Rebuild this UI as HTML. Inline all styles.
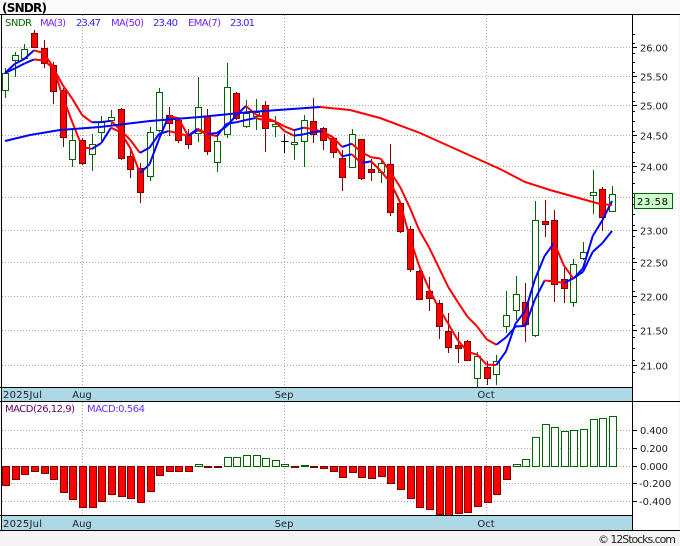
<!DOCTYPE html>
<html><head><meta charset="utf-8"><style>
html,body{margin:0;padding:0;background:#f4f4f4;}
svg{display:block;font-family:"DejaVu Sans","Liberation Sans",sans-serif;}
</style></head><body>
<svg id="s" width="680" height="546" xmlns="http://www.w3.org/2000/svg">
<rect x="0" y="0" width="680" height="546" fill="#f4f4f4"/>
<rect x="0" y="0" width="680" height="14" fill="#fafafa"/>
<rect x="1" y="14" width="678" height="516" fill="#fff"/>
<rect x="1" y="387" width="631" height="14" fill="#add8e6"/>
<rect x="1" y="516" width="631" height="14" fill="#add8e6"/>
<text x="2" y="12" font-size="12" font-weight="bold" fill="#000" textLength="45">(SNDR)</text>
<g id="g"></g>
<line x1="0" y1="14.5" x2="680" y2="14.5" stroke="#000"/>
<line x1="0" y1="387.5" x2="632" y2="387.5" stroke="#000"/>
<line x1="0" y1="401.5" x2="680" y2="401.5" stroke="#000"/>
<line x1="0" y1="515.5" x2="632" y2="515.5" stroke="#000"/>
<line x1="0" y1="530.5" x2="680" y2="530.5" stroke="#000"/>
<line x1="1.5" y1="14" x2="1.5" y2="530" stroke="#000"/>
<line x1="632.5" y1="14" x2="632.5" y2="530" stroke="#000"/>
<g font-size="10" fill="#222">
<text x="3" y="398" textLength="39">2025Jul</text>
<text x="82" y="398" text-anchor="middle">Aug</text>
<text x="284" y="398" text-anchor="middle">Sep</text>
<text x="486" y="398" text-anchor="middle">Oct</text>
<text x="3" y="527" textLength="39">2025Jul</text>
<text x="82" y="527" text-anchor="middle">Aug</text>
<text x="284" y="527" text-anchor="middle">Sep</text>
<text x="486" y="527" text-anchor="middle">Oct</text>
</g>
<g font-size="10">
<text x="5" y="26" fill="#006400" textLength="27">SNDR</text>
<text x="40" y="26" fill="#7a22ff" textLength="26">MA(3)</text>
<text x="76" y="26" fill="#3322ff" textLength="25">23.47</text>
<text x="111" y="26" fill="#7a22ff" textLength="33">MA(50)</text>
<text x="153" y="26" fill="#3322ff" textLength="25">23.40</text>
<text x="188" y="26" fill="#7a22ff" textLength="33">EMA(7)</text>
<text x="230" y="26" fill="#3322ff" textLength="25">23.01</text>
<text x="5" y="412" fill="#660066" textLength="70">MACD(26,12,9)</text>
<text x="87" y="412" fill="#6633ff" textLength="58">MACD:0.564</text>
</g>
<text x="676" y="543" font-size="11" fill="#222" text-anchor="end" textLength="78">© 12Stocks.com</text>
</svg>
<script>
var g=document.getElementById('g'),h='';
function L(x1,y1,x2,y2,c,w,d){h+='<line x1="'+x1+'" y1="'+y1+'" x2="'+x2+'" y2="'+y2+'" stroke="'+c+'" stroke-width="'+(w||1)+'"'+(d?' stroke-dasharray="'+d+'"':'')+'/>';}
function T(x,y,t,tl){h+='<text x="'+x+'" y="'+y+'" font-size="10" fill="#222"'+(tl?' textLength="'+tl+'"':'')+'>'+t+'</text>';}
function Y(p){return 47+(Math.log(26)-Math.log(p))*1488.6;}
for(var p=21;p<=26.001;p+=0.5){var y=Math.round(Y(p))+0.5;L(2,y,632,y,'#aaa',1,'1,2');L(632,y,637,y,'#000');T(640,y+4,p.toFixed(2),28);}
for(var p=20.9;p<=26.3;p+=0.1667){var y=Math.round(Y(p))+0.5;if(y>16&&y<386)L(632,y,635,y,'#000');}
[82,284,486].forEach(function(x){L(x+0.5,15,x+0.5,387,'#aaa',1,'1,2');L(x+0.5,402,x+0.5,515,'#aaa',1,'1,2');});
[[430,'0.400',640,28],[448,'0.200',640,28],[466,'0.000',640,28],[483,'-0.200',639,0],[501,'-0.400',639,0]].forEach(function(a){L(2,a[0]+0.5,632,a[0]+0.5,'#aaa',1,'1,2');L(632,a[0]+0.5,637,a[0]+0.5,'#000');T(a[2],a[0]+4,a[1],a[3]);});
var D=[[73,90,68,98,'g'],[55,60,52,77,'g'],[49,58,44,60,'g'],[33,47,30,48,'r'],[48,63,40,68,'r'],[65,91,62,104,'r'],[90,137,88,147,'r'],[140,159,130,167,'g'],[140,163,138,165,'r'],[144,154,134,171,'g'],[122,132,116,143,'g'],[117,120,110,125,'g'],[109,158,108,160,'r'],[156,169,150,178,'r'],[168,192,163,203,'r'],[132,176,127,181,'g'],[92,130,88,132,'g'],[115,123,107,136,'r'],[120,140,117,143,'r'],[135,144,129,149,'r'],[107,133,77,142,'g'],[116,151,109,155,'r'],[141,162,136,172,'g'],[87,134,63,138,'g'],[93,118,92,120,'r'],[113,126,100,128,'g'],[112,116,99,130,'g'],[105,128,101,152,'r'],[124,125,116,137,'g'],[141,141,134,153,'k'],[142,142,130,160,'g'],[120,141,115,167,'g'],[121,134,98,143,'r'],[128,140,127,150,'r'],[138,152,137,158,'r'],[158,177,150,191,'r'],[134,167,129,168,'g'],[139,178,139,180,'r'],[169,172,159,181,'r'],[163,172,159,183,'g'],[164,212,144,216,'r'],[203,231,203,233,'r'],[229,269,226,272,'r'],[271,299,270,300,'r'],[291,298,277,311,'r'],[303,326,300,339,'r'],[331,347,313,353,'r'],[345,348,332,363,'r'],[341,360,340,361,'r'],[356,378,352,387,'g'],[367,378,361,385,'r'],[361,374,355,385,'g'],[315,326,291,333,'g'],[294,310,276,320,'g'],[302,324,283,342,'r'],[220,335,201,337,'g'],[221,224,200,237,'r'],[220,284,210,302,'r'],[279,288,268,303,'r'],[264,302,259,307,'g'],[252,258,242,260,'g'],[192,195,170,214,'g'],[189,217,187,231,'r'],[194,211,186,212,'g']];
function X(i){return 5+i*9.635;}
D.forEach(function(d,i){var x=Math.round(X(i))+0.5;var c=d[4]=='g'?'#006400':(d[4]=='k'?'#000':'#800000');
L(x,d[2],x,d[3],c,1);
if(d[4]=='k'){L(x-3,d[0]+0.5,x+4,d[0]+0.5,'#000');return;}
var hgt=Math.max(d[1]-d[0],2);
h+='<rect x="'+(x-3)+'" y="'+(d[0]+0.5)+'" width="6" height="'+hgt+'" fill="'+(d[4]=='g'?'#fff':'#ff0000')+'" stroke="'+c+'"/>';});
var C=D.map(function(d){return d[4]=='r'?d[1]:d[0];});
var M3=C.map(function(c,i){var s=0,n=0;for(var k=Math.max(0,i-2);k<=i;k++){s+=C[k];n++;}return s/n;});
var E=[],a=2/8;C.forEach(function(c,i){E.push(i==0?c:E[i-1]+a*(c-E[i-1]));});
function seg(arr){for(var i=1;i<arr.length;i++){var c=arr[i]<arr[i-1]?'#0000ff':'#ff0000';L(X(i-1),arr[i-1],X(i),arr[i],c,2);}}
seg(E);seg(M3);
var M50b=[[5,141],[30,135],[60,130],[100,127],[150,121],[200,117],[250,112],[320,107]];
var M50r=[[320,107],[350,110],[380,118],[420,133],[460,151],[500,169],[525,182],[550,190],[575,197],[600,204],[612,205]];
function pl(p,c){h+='<polyline points="'+p.map(function(q){return q.join(',')}).join(' ')+'" fill="none" stroke="'+c+'" stroke-width="2"/>';}
pl(M50b,'#0000ff');pl(M50r,'#ff0000');
var MD=[485,479,474,471,473,479,492,499,507,507,501,494,496,498,502,491,475,471,471,471,464,467,467,457,457,455,455,458,460,464,467,465,467,468,471,477,472,477,478,476,483,489,498,507,509,514,515,513,512,506,502,494,479,464,459,437,424,427,431,430,429,419,418,416];
MD.forEach(function(v,i){var x=Math.round(X(i))-3+0.5;if(v<466){h+='<rect x="'+x+'" y="'+(v+0.5)+'" width="7" height="'+Math.max(466-v,1)+'" fill="#fff" stroke="#006400"/>';}else{h+='<rect x="'+x+'" y="466.5" width="7" height="'+Math.max(v-466,1)+'" fill="#ff0000" stroke="#800000"/>';}});
h+='<rect x="634.5" y="193.5" width="38" height="15" fill="#ccffcc" stroke="#006400"/><text x="637" y="205" font-size="10" fill="#000" textLength="31">23.58</text>';
g.innerHTML=h;
</script>
</body></html>
